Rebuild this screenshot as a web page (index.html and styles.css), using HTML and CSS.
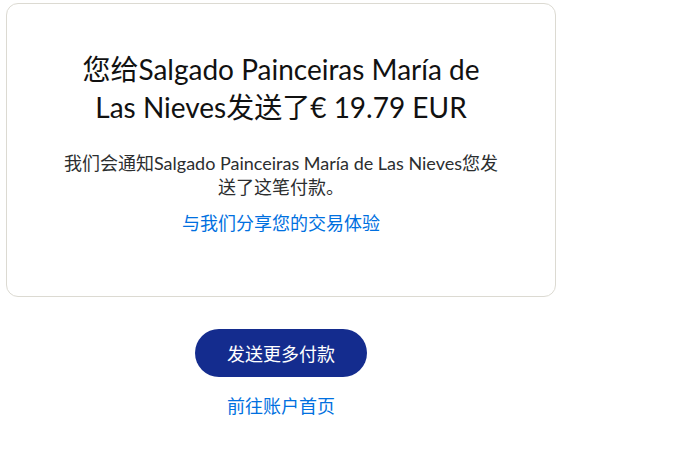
FILE: index.html
```html
<!DOCTYPE html>
<html lang="zh-CN">
<head>
    <meta charset="UTF-8">
    <meta name="viewport" content="width=device-width, initial-scale=1.0">
    <title>付款已发送</title>
    <link rel="stylesheet" href="styles.css">
</head>
<body>
    <main class="page">
        <section class="card">
            <h1 class="title">您给Salgado Painceiras María de Las Nieves发送了€ 19.79 EUR</h1>
            <p class="note">我们会通知Salgado Painceiras María de Las Nieves您发送了这笔付款。</p>
            <a class="link" href="#">与我们分享您的交易体验</a>
        </section>

        <div class="actions">
            <button type="button" class="btn">发送更多付款</button>
            <a class="link" href="#">前往账户首页</a>
        </div>
    </main>
</body>
</html>
```

FILE: styles.css
```css
body {
    margin: 0;
    padding: 0;
    background-color: #fff;
    font-family: "Lato", "Noto Sans CJK SC", sans-serif;
    color: #1a1a1a;
}

.page {
    width: 550px;
    padding: 3px 0 0 6px;
}

.card {
    box-sizing: border-box;
    height: 294px;
    border: 1px solid #dcdad2;
    border-radius: 12px;
    padding: 46px 40px 0;
    display: flex;
    flex-direction: column;
    align-items: center;
    text-align: center;
}

.title {
    margin: 0 0 25px;
    max-width: 440px;
    font-size: 28px;
    font-weight: 400;
    line-height: 38px;
    color: #111;
}

.note {
    margin: 0 0 11px;
    max-width: 446px;
    font-size: 18px;
    line-height: 24px;
    color: #2c2e2f;
}

.link {
    color: #0070e0;
    text-decoration: none;
    font-size: 18px;
    line-height: 26px;
}

.actions {
    display: flex;
    flex-direction: column;
    align-items: center;
    padding-top: 32px;
}

.btn {
    width: 172px;
    height: 48px;
    border: none;
    border-radius: 24px;
    background-color: #142c8e;
    color: #fff;
    font-family: inherit;
    font-size: 18px;
    margin-bottom: 16px;
    cursor: pointer;
}
```
